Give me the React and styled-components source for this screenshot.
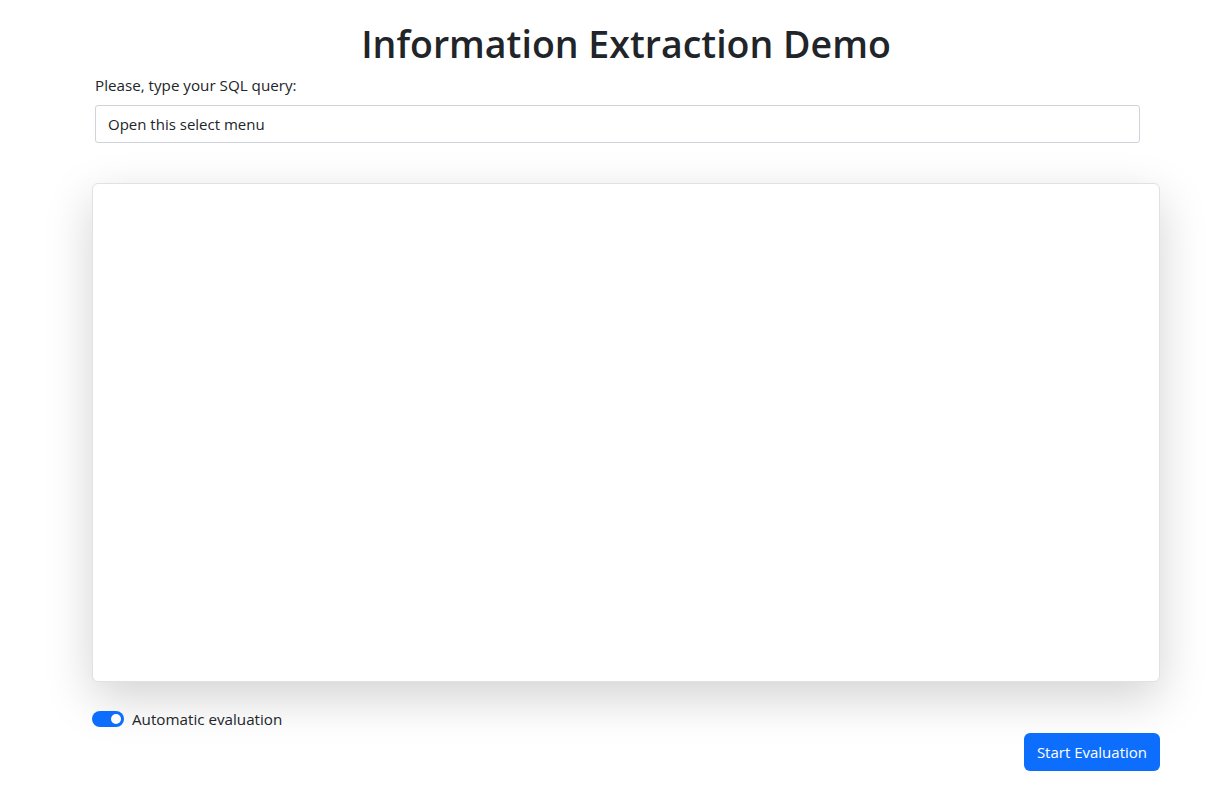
import React from "react";
import styled, { createGlobalStyle } from "styled-components";

const Global = createGlobalStyle`
  html, body { margin: 0; padding: 0; background: #fff; }
  body { font-family: "Open Sans", "Noto Sans", sans-serif; color: #212529; }
  * { box-sizing: border-box; }
`;

const Page = styled.main`
  width: 1068px;
  margin-left: 92px;
  padding-top: 20px;
  display: flex;
  flex-direction: column;
`;

const Title = styled.h1`
  margin: 0;
  font-size: 37.5px;
  line-height: 48px;
  font-weight: 600;
  text-align: center;
  color: #212529;
`;

const QueryForm = styled.div`
  margin: 5px 20px 0 3px;
  display: flex;
  flex-direction: column;
  gap: 8px;
`;

const Label = styled.label`
  font-size: 15.2px;
  line-height: 24px;
`;

const Select = styled.div`
  height: 38px;
  border: 1px solid #ced4da;
  border-radius: 3px;
  padding: 0 12px;
  display: flex;
  align-items: center;
  font-size: 15px;
  color: #212529;
  background: #fff;
`;

const Card = styled.section`
  margin-top: 40px;
  height: 499px;
  border: 1px solid #dee2e6;
  border-radius: 6px;
  background: #fff;
  box-shadow: 0 1rem 3rem rgba(0, 0, 0, 0.175);
`;

const SwitchRow = styled.div`
  margin-top: 27px;
  display: flex;
  align-items: center;
  gap: 8px;
  font-size: 15.2px;
  line-height: 20px;
`;

const Switch = styled.span`
  position: relative;
  width: 32px;
  height: 16px;
  border-radius: 8px;
  background: #0d6efd;
  flex-shrink: 0;
  &::after {
    content: "";
    position: absolute;
    right: 3px;
    top: 3px;
    width: 10px;
    height: 10px;
    border-radius: 50%;
    background: #fff;
  }
`;

const Footer = styled.div`
  margin-top: 4px;
  display: flex;
  justify-content: flex-end;
`;

const Button = styled.button`
  height: 38px;
  padding: 0 13px;
  border: none;
  border-radius: 6px;
  background: #0d6efd;
  color: #fff;
  font-family: inherit;
  font-size: 15px;
  cursor: pointer;
`;

export default function App() {
  return (
    <>
      <Global />
      <Page>
        <Title>Information Extraction Demo</Title>
        <QueryForm>
          <Label>Please, type your SQL query:</Label>
          <Select>Open this select menu</Select>
        </QueryForm>
        <Card />
        <SwitchRow>
          <Switch />
          <span>Automatic evaluation</span>
        </SwitchRow>
        <Footer>
          <Button>Start Evaluation</Button>
        </Footer>
      </Page>
    </>
  );
}
